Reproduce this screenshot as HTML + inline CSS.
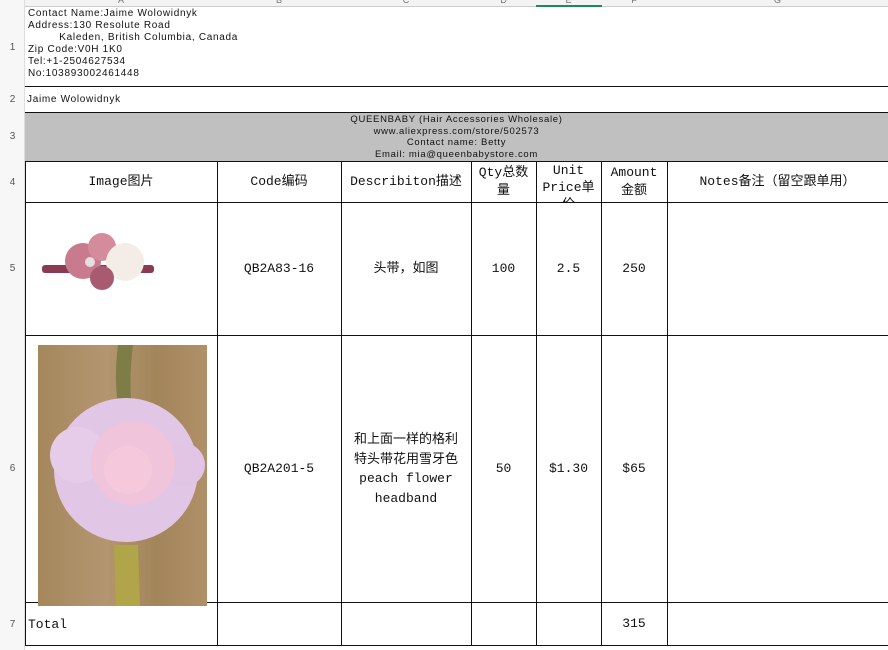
<!DOCTYPE html>
<html><head><meta charset="utf-8"><style>
*{margin:0;padding:0;box-sizing:border-box}
body{width:888px;height:650px;overflow:hidden;background:#fff;position:relative;font-family:"Liberation Mono","Noto Sans CJK SC",monospace;color:#111}
.a{position:absolute}
.hl{position:absolute;height:1px;background:#111}
.vl{position:absolute;width:1px;background:#111}
.rn{position:absolute;left:0;width:25px;text-align:center;font-size:10px;color:#555;font-family:"Liberation Sans",sans-serif}
.cl{position:absolute;top:-5px;text-align:center;font-size:9px;color:#777;font-family:"Liberation Sans",sans-serif}
.c{position:absolute;display:flex;align-items:center;justify-content:center;text-align:center;font-size:13px;line-height:18px}
.s{font-family:"Liberation Sans","Noto Sans CJK SC",sans-serif;font-size:10px;letter-spacing:.7px;line-height:12px}
</style></head><body>
<div class="a" style="left:0;top:0;width:888px;height:7px;background:#f3f3f3;border-bottom:1px solid #ccc"></div>
<div class="cl" style="left:25px;width:192px">A</div><div class="cl" style="left:217px;width:124px">B</div><div class="cl" style="left:341px;width:130px">C</div><div class="cl" style="left:471px;width:65px">D</div><div class="cl" style="left:536px;width:65px">E</div><div class="cl" style="left:601px;width:66px">F</div><div class="cl" style="left:667px;width:221px">G</div>
<div class="a" style="left:536px;top:5px;width:66px;height:2px;background:#1e8a5a"></div>
<div class="a" style="left:0;top:0;width:25px;height:650px;background:#f7f7f7;border-right:1px solid #ddd"></div>
<div class="rn" style="top:42px">1</div><div class="rn" style="top:94px">2</div><div class="rn" style="top:131px">3</div><div class="rn" style="top:177px">4</div><div class="rn" style="top:263px">5</div><div class="rn" style="top:463px">6</div><div class="rn" style="top:619px">7</div>
<div class="a s" style="left:28px;top:8px;color:#111">Contact Name:Jaime Wolowidnyk<br>Address:130 Resolute Road<br>&nbsp;&nbsp;&nbsp;&nbsp;&nbsp;&nbsp;&nbsp;&nbsp;&nbsp;Kaleden, British Columbia, Canada<br>Zip Code:V0H 1K0<br>Tel:+1-2504627534<br>No:103893002461448</div>
<div class="a s" style="left:27px;top:94px">Jaime Wolowidnyk</div>
<div class="a" style="left:25px;top:112px;width:863px;height:49px;background:#c0c0c0"></div>
<div class="a s" style="left:25px;top:114px;width:863px;text-align:center;font-size:9.5px;line-height:11.5px">QUEENBABY (Hair Accessories Wholesale)<br>www.aliexpress.com/store/502573<br>Contact name: Betty<br>Email: mia@queenbabystore.com</div>
<div class="hl" style="left:25px;top:86px;width:863px"></div>
<div class="hl" style="left:25px;top:112px;width:863px"></div>
<div class="hl" style="left:25px;top:161px;width:863px"></div>
<div class="hl" style="left:25px;top:202px;width:863px"></div>
<div class="hl" style="left:25px;top:335px;width:863px"></div>
<div class="hl" style="left:25px;top:602px;width:863px"></div>
<div class="hl" style="left:25px;top:645px;width:863px"></div>
<div class="vl" style="left:25px;top:161px;height:485px"></div>
<div class="vl" style="left:217px;top:161px;height:485px"></div>
<div class="vl" style="left:341px;top:161px;height:485px"></div>
<div class="vl" style="left:471px;top:161px;height:485px"></div>
<div class="vl" style="left:536px;top:161px;height:485px"></div>
<div class="vl" style="left:601px;top:161px;height:485px"></div>
<div class="vl" style="left:667px;top:161px;height:485px"></div>
<div class="c" style="left:25px;top:162px;width:192px;height:40px">Image图片</div>
<div class="c" style="left:217px;top:162px;width:124px;height:40px">Code编码</div>
<div class="c" style="left:341px;top:162px;width:130px;height:40px">Describiton描述</div>
<div class="c" style="left:471px;top:162px;width:65px;height:40px">Qty总数<br>量</div>
<div class="a" style="left:536px;top:162px;width:65px;height:40px;overflow:hidden;text-align:center;font-size:13px;line-height:17px">Unit<br>Price单<br>价</div>
<div class="c" style="left:601px;top:162px;width:66px;height:40px">Amount<br>金额</div>
<div class="c" style="left:667px;top:162px;width:221px;height:40px">Notes备注（留空跟单用）</div>
<div class="c" style="left:217px;top:203px;width:124px;height:132px">QB2A83-16</div>
<div class="c" style="left:341px;top:203px;width:130px;height:132px">头带，如图</div>
<div class="c" style="left:471px;top:203px;width:65px;height:132px">100</div>
<div class="c" style="left:536px;top:203px;width:65px;height:132px">2.5</div>
<div class="c" style="left:601px;top:203px;width:66px;height:132px">250</div>
<div class="c" style="left:217px;top:336px;width:124px;height:266px">QB2A201-5</div>
<div class="c" style="left:341px;top:336px;width:130px;height:266px;line-height:19.5px">和上面一样的格利<br>特头带花用雪牙色<br>peach flower<br>headband</div>
<div class="c" style="left:471px;top:336px;width:65px;height:266px">50</div>
<div class="c" style="left:536px;top:336px;width:65px;height:266px">$1.30</div>
<div class="c" style="left:601px;top:336px;width:66px;height:266px">$65</div>
<div class="a" style="left:28px;top:617px;font-size:13px">Total</div>
<div class="c" style="left:601px;top:603px;width:66px;height:42px">315</div>
<svg class="a" style="left:40px;top:228px" width="120" height="80">
<rect x="2" y="37" width="112" height="8" rx="3" fill="#8a3a52"/>
<circle cx="43" cy="33" r="18" fill="#c87a8e"/><circle cx="62" cy="19" r="14" fill="#d48c9c"/>
<circle cx="85" cy="34" r="19" fill="#f4ece6"/><circle cx="62" cy="50" r="12" fill="#a85a70"/>
<circle cx="50" cy="34" r="5" fill="#e4dede"/></svg>
<div class="a" style="left:38px;top:345px;width:169px;height:261px;background:linear-gradient(90deg,#a5875c,#b39670 40%,#a3855a 70%,#b09068)"></div>
<svg class="a" style="left:38px;top:345px" width="169" height="261">
<path d="M80 0 Q75 40 82 70 L95 70 Q90 40 95 0Z" fill="#7e7d48"/>
<path d="M76 200 L100 200 L102 261 L78 261Z" fill="#b0a548"/>
<circle cx="88" cy="125" r="72" fill="#e2c6e6"/>
<circle cx="40" cy="110" r="28" fill="#e6cce8"/><circle cx="145" cy="120" r="22" fill="#e2c4e4"/>
<circle cx="95" cy="118" r="42" fill="#f0c4da"/><circle cx="90" cy="125" r="24" fill="#f6c8dc"/></svg>
</body></html>
